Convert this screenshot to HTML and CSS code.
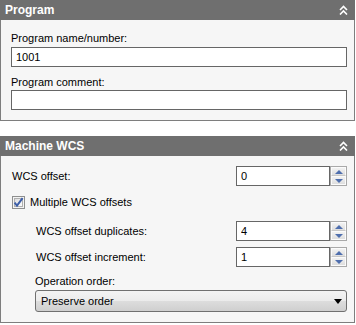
FILE: index.html
```html
<!DOCTYPE html>
<html lang="en">
<head>
  <meta charset="UTF-8">
  <title>Program settings</title>
  <link rel="stylesheet" href="styles.css">
</head>
<body>
  <div class="page">

    <div class="panel">
      <div class="panel-head">
        <span>Program</span>
        <svg class="collapse" width="9" height="10" viewBox="0 0 9 10"><path d="M1 5 L4.5 1.5 L8 5 M1 9.5 L4.5 6 L8 9.5" fill="none" stroke="#fff" stroke-width="1.6"/></svg>
      </div>
      <div class="panel-body">
        <div class="field-label first">Program name/number:</div>
        <input class="text-box" type="text" value="1001">
        <div class="field-label second">Program comment:</div>
        <input class="text-box" type="text" value="">
      </div>
    </div>

    <div class="panel">
      <div class="panel-head">
        <span>Machine WCS</span>
        <svg class="collapse" width="9" height="10" viewBox="0 0 9 10"><path d="M1 5 L4.5 1.5 L8 5 M1 9.5 L4.5 6 L8 9.5" fill="none" stroke="#fff" stroke-width="1.6"/></svg>
      </div>
      <div class="panel-body">
        <div class="row">
          <span>WCS offset:</span>
          <div class="spinner">
            <input type="text" value="0">
            <div class="spin-btns"><span class="spin up"></span><span class="spin down"></span></div>
          </div>
        </div>

        <div class="check-row">
          <svg class="checkbox" width="13" height="13" viewBox="0 0 13 13">
            <defs>
              <linearGradient id="cbg" x1="0" y1="0" x2="1" y2="1">
                <stop offset="0" stop-color="#d9dadc"/>
                <stop offset="1" stop-color="#ffffff"/>
              </linearGradient>
            </defs>
            <rect x="0.5" y="0.5" width="12" height="12" fill="#f4f4f4" stroke="#8e8f8f"/>
            <rect x="2.5" y="2.5" width="8" height="8" fill="url(#cbg)" stroke="#b0b0b0"/>
            <path d="M2.6 6.6 L5 9.6 L10.6 2.2" fill="none" stroke="#3c5ea8" stroke-width="2"/>
          </svg>
          <span>Multiple WCS offsets</span>
        </div>

        <div class="row indent dup">
          <span>WCS offset duplicates:</span>
          <div class="spinner">
            <input type="text" value="4">
            <div class="spin-btns"><span class="spin up"></span><span class="spin down"></span></div>
          </div>
        </div>

        <div class="row indent inc">
          <span>WCS offset increment:</span>
          <div class="spinner">
            <input type="text" value="1">
            <div class="spin-btns"><span class="spin up"></span><span class="spin down"></span></div>
          </div>
        </div>

        <div class="indent">
          <div class="field-label order">Operation order:</div>
          <div class="dropdown">
            <span>Preserve order</span>
            <span class="arrow"></span>
          </div>
        </div>
      </div>
    </div>

  </div>
</body>
</html>
```

FILE: styles.css
```css
body {
  margin: 0;
  font-family: "Liberation Sans", Arial, sans-serif;
  font-size: 11px;
  color: #000;
  background-color: #fff;
}
.page {
  display: flex;
  flex-direction: column;
  gap: 15px;
  width: 355px;
}
.panel-head {
  height: 20px;
  background-color: #6f6f6f;
  color: #fff;
  font-size: 12px;
  font-weight: bold;
  display: flex;
  align-items: center;
  justify-content: space-between;
  padding: 0 7px 0 5px;
}
.collapse {
  display: block;
}
.panel-body {
  background-color: #f6f6f6;
  border: 1px solid #7e7e7e;
  border-top: none;
  padding: 10px 7px 10px 10px;
}
.field-label {
  line-height: 14px;
}
.field-label.first {
  margin-top: 1px;
  margin-bottom: 2px;
}
.field-label.second {
  margin-top: 8px;
  margin-bottom: 1px;
}
.field-label.order {
  margin-top: 7px;
  margin-bottom: 2px;
}
.text-box {
  display: block;
  width: 100%;
  height: 20px;
  box-sizing: border-box;
  border: 1px solid #666;
  background-color: #fff;
  font-family: inherit;
  font-size: 11px;
  padding: 0 4px;
  margin: 0;
  outline: none;
}
.row {
  display: flex;
  align-items: center;
  justify-content: space-between;
  height: 20px;
  padding-left: 1px;
}
.indent {
  margin-left: 24px;
}
.row.dup {
  margin-top: 11px;
}
.row.inc {
  margin-top: 6px;
}
.spinner {
  display: flex;
  width: 111px;
  height: 20px;
}
.spinner input {
  width: 94px;
  height: 20px;
  box-sizing: border-box;
  border: 1px solid #666;
  background-color: #fff;
  font-family: inherit;
  font-size: 11px;
  padding: 0 4px;
  margin: 0;
  outline: none;
}
.spin-btns {
  width: 17px;
  height: 20px;
  box-sizing: border-box;
  border: 1px solid #a9a9a9;
  background-color: #e4e4e4;
  display: flex;
  flex-direction: column;
}
.spin {
  flex: 1;
  border: 1px solid #fbfbfb;
  background: linear-gradient(#f2f2f2, #dedede);
  display: flex;
  align-items: center;
  justify-content: center;
}
.spin.up {
  border-bottom-color: #c8c8c8;
}
.spin.up::after {
  content: "";
  border-left: 4px solid transparent;
  border-right: 4px solid transparent;
  border-bottom: 4px solid #4f6fae;
}
.spin.down::after {
  content: "";
  border-left: 4px solid transparent;
  border-right: 4px solid transparent;
  border-top: 4px solid #4f6fae;
}
.check-row {
  display: flex;
  align-items: center;
  gap: 5px;
  height: 16px;
  margin-top: 8px;
  padding-left: 1px;
}
.checkbox {
  display: block;
}
.dropdown {
  height: 22px;
  box-sizing: border-box;
  border: 1px solid #707070;
  border-radius: 3px;
  background: linear-gradient(#f3f3f3 0%, #ebebeb 50%, #dddddd 50%, #cfcfcf 100%);
  display: flex;
  align-items: center;
  justify-content: space-between;
  padding: 0 4px 0 5px;
}
.dropdown .arrow {
  border-left: 4px solid transparent;
  border-right: 4px solid transparent;
  border-top: 5px solid #000;
}
```
